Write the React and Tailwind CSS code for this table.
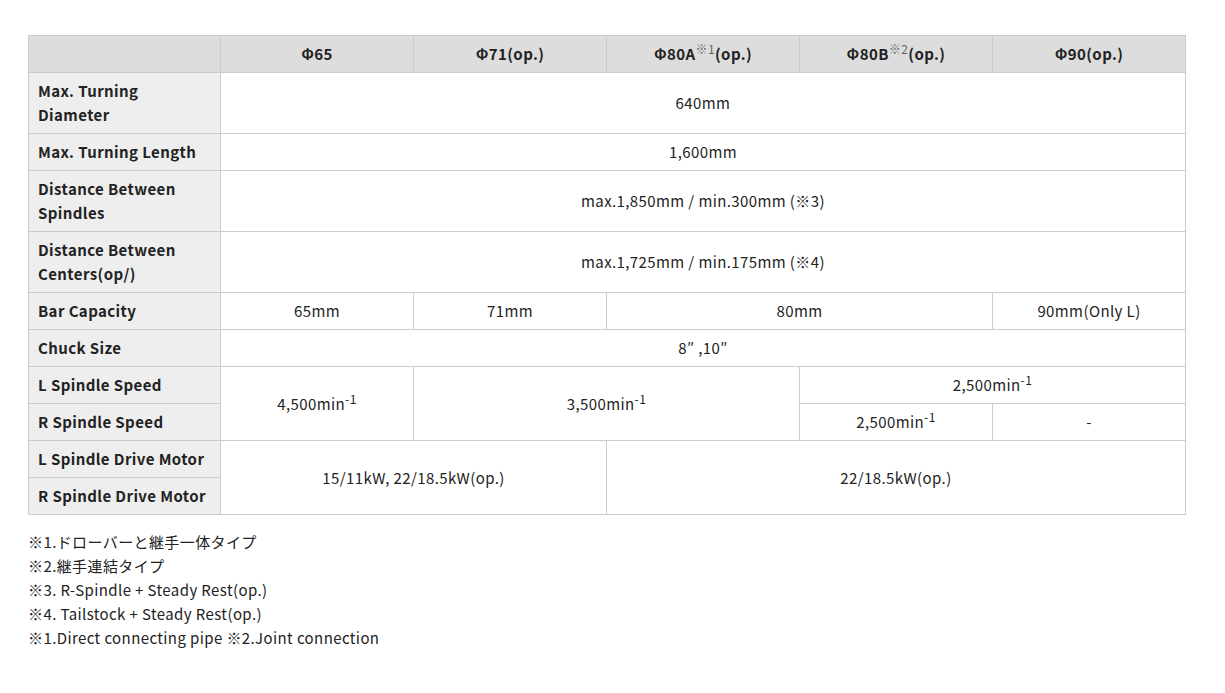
const th = 'border border-[#cccccc] bg-[#eeeeee] text-left font-bold px-[9px] py-[6px] align-middle'
const td = 'border border-[#cccccc] bg-white text-center font-normal px-[9px] py-[6px] align-middle'
const hd = 'border border-[#cccccc] bg-[#dddddd] text-center font-bold px-[9px] py-[6px]'

function Min({ v }) {
  return (
    <>
      {v}min<sup className="text-[12px]">-1</sup>
    </>
  )
}

export default function App() {
  return (
    <div
      className="bg-white min-h-[693px] pt-[35px] px-[28px] text-[15px] leading-[24px] tracking-[0.4px] text-[#222222]"
      style={{ fontFamily: '"Noto Sans CJK JP", "Noto Sans", sans-serif' }}
    >
      <table className="table-fixed border-collapse w-[1158px]">
        <colgroup>
          <col className="w-[192px]" />
          <col className="w-[193px]" />
          <col className="w-[193px]" />
          <col className="w-[193px]" />
          <col className="w-[193px]" />
          <col className="w-[193px]" />
        </colgroup>
        <thead>
          <tr>
            <th className={hd}></th>
            <th className={hd}>Φ65</th>
            <th className={hd}>Φ71(op.)</th>
            <th className={hd}>
              Φ80A<sup className="text-[12px] font-normal text-[#666]">※1</sup>(op.)
            </th>
            <th className={hd}>
              Φ80B<sup className="text-[12px] font-normal text-[#666]">※2</sup>(op.)
            </th>
            <th className={hd}>Φ90(op.)</th>
          </tr>
        </thead>
        <tbody>
          <tr>
            <th className={th}>Max. Turning<br />Diameter</th>
            <td className={td} colSpan={5}>640mm</td>
          </tr>
          <tr>
            <th className={th}>Max. Turning Length</th>
            <td className={td} colSpan={5}>1,600mm</td>
          </tr>
          <tr>
            <th className={th}>Distance Between<br />Spindles</th>
            <td className={td} colSpan={5}>max.1,850mm / min.300mm (※3)</td>
          </tr>
          <tr>
            <th className={th}>Distance Between<br />Centers(op/)</th>
            <td className={td} colSpan={5}>max.1,725mm / min.175mm (※4)</td>
          </tr>
          <tr>
            <th className={th}>Bar Capacity</th>
            <td className={td}>65mm</td>
            <td className={td}>71mm</td>
            <td className={td} colSpan={2}>80mm</td>
            <td className={td}>90mm(Only L)</td>
          </tr>
          <tr>
            <th className={th}>Chuck Size</th>
            <td className={td} colSpan={5}>8″ ,10″</td>
          </tr>
          <tr>
            <th className={th}>L Spindle Speed</th>
            <td className={td} rowSpan={2}><Min v="4,500" /></td>
            <td className={td} rowSpan={2} colSpan={2}><Min v="3,500" /></td>
            <td className={td} colSpan={2}><Min v="2,500" /></td>
          </tr>
          <tr>
            <th className={th}>R Spindle Speed</th>
            <td className={td}><Min v="2,500" /></td>
            <td className={td}>-</td>
          </tr>
          <tr>
            <th className={th}>L Spindle Drive Motor</th>
            <td className={td} rowSpan={2} colSpan={2}>15/11kW, 22/18.5kW(op.)</td>
            <td className={td} rowSpan={2} colSpan={3}>22/18.5kW(op.)</td>
          </tr>
          <tr>
            <th className={th}>R Spindle Drive Motor</th>
          </tr>
        </tbody>
      </table>
      <div className="mt-[15px]">
        <p>※1.ドローバーと継手一体タイプ</p>
        <p>※2.継手連結タイプ</p>
        <p>※3. R-Spindle + Steady Rest(op.)</p>
        <p>※4. Tailstock + Steady Rest(op.)</p>
        <p>※1.Direct connecting pipe ※2.Joint connection</p>
      </div>
    </div>
  )
}
